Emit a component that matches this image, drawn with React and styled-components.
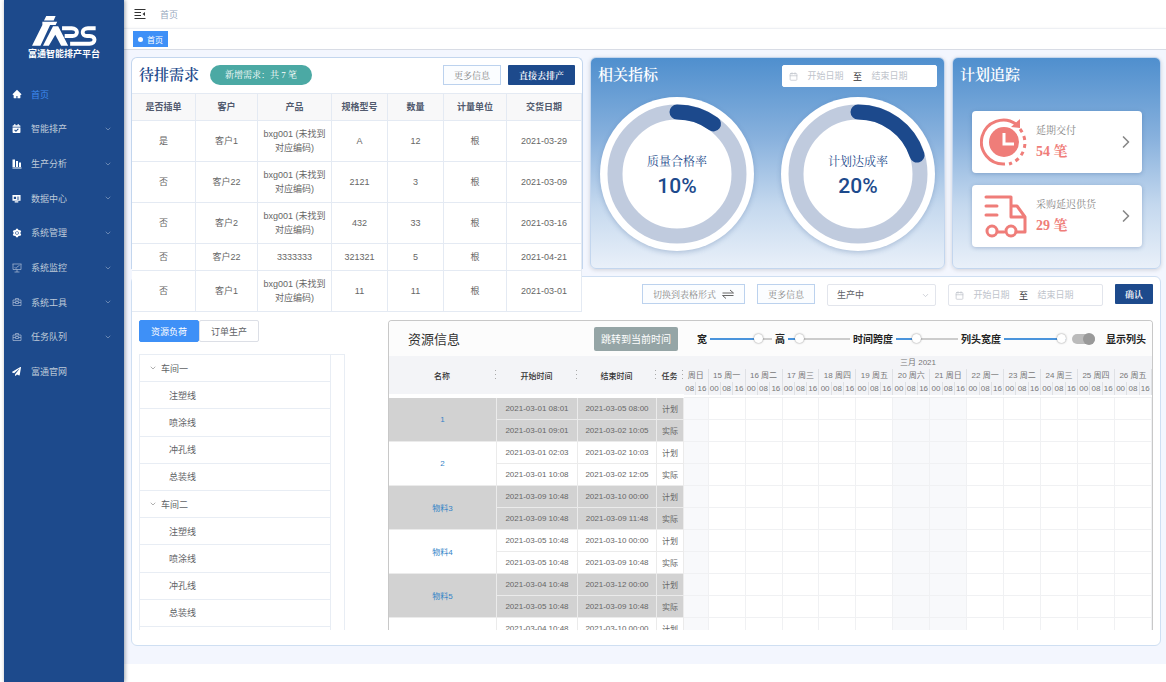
import React, { useState } from 'react';
import styled, { createGlobalStyle } from 'styled-components';
import { AiFillHome, AiFillSetting } from 'react-icons/ai';
import { FaCalendarCheck, FaPaperPlane } from 'react-icons/fa';
import { Calendar, ChevronDown, ChevronRight } from 'lucide-react';

const demandColumns = [
  { title: '是否插单', width: 64 },
  { title: '客户', width: 62 },
  { title: '产品', width: 74 },
  { title: '规格型号', width: 56 },
  { title: '数量', width: 56 },
  { title: '计量单位', width: 63 },
  { title: '交货日期', width: 75 },
];

const demandRows = [
  ['是', '客户1', 'bxg001 (未找到对应编码)', 'A', '12', '根', '2021-03-29'],
  ['否', '客户22', 'bxg001 (未找到对应编码)', '2121', '3', '根', '2021-03-09'],
  ['否', '客户2', 'bxg001 (未找到对应编码)', '432', '33', '根', '2021-03-16'],
  ['否', '客户22', '3333333', '321321', '5', '根', '2021-04-21'],
  ['否', '客户1', 'bxg001 (未找到对应编码)', '11', '11', '根', '2021-03-01'],
];

const lines = ['注塑线', '喷涂线', '冲孔线', '总装线'];
const workshops = ['车间一', '车间二'];

const tasks = [
  {
    name: '1',
    plan: ['2021-03-01 08:01', '2021-03-05 08:00'],
    real: ['2021-03-01 09:01', '2021-03-02 10:05'],
  },
  {
    name: '2',
    plan: ['2021-03-01 02:03', '2021-03-02 10:03'],
    real: ['2021-03-01 10:08', '2021-03-02 12:05'],
  },
  {
    name: '物料3',
    plan: ['2021-03-09 10:48', '2021-03-10 00:00'],
    real: ['2021-03-09 10:48', '2021-03-09 11:48'],
  },
  {
    name: '物料4',
    plan: ['2021-03-05 10:48', '2021-03-10 00:00'],
    real: ['2021-03-05 10:48', '2021-03-09 10:48'],
  },
  {
    name: '物料5',
    plan: ['2021-03-04 10:48', '2021-03-12 00:00'],
    real: ['2021-03-05 10:48', '2021-03-09 10:48'],
  },
  {
    name: '',
    plan: ['2021-03-04 10:48', '2021-03-10 00:00'],
  },
];

const days = [
  { label: '周日', hours: ['08', '16'], rest: true },
  ...['15 周一', '16 周二', '17 周三', '18 周四', '19 周五', '20 周六', '21 周日', '22 周一', '23 周二', '24 周三', '25 周四', '26 周五'].map(
    (label) => ({
      label,
      hours: ['00', '08', '16'],
      rest: label.includes('周六') || label.includes('周日'),
    })
  ),
];

const BarsIcon = () => (
  <svg width="10" height="10" viewBox="0 0 20 20" fill="currentColor">
    <path d="M1 1h5v15H1zM8 4h4v12H8zM14 7h4v9h-4zM1 17h18v2H1z" />
  </svg>
);
const DataIcon = () => (
  <svg width="9" height="9" viewBox="0 0 20 20" fill="currentColor">
    <path
      fillRule="evenodd"
      d="M1 2h18v13H1zM4 6v5h5V6zM11 6v2h5V6zM11 10v2h5v-2zM6 16h8v3H6z"
    />
  </svg>
);
const MonitorIcon = () => (
  <svg width="10" height="10" viewBox="0 0 20 20" fill="none" stroke="currentColor" strokeWidth="1.5">
    <path d="M1 2h18M2 2v11h16V2M10 13v5M5 18h10M5 8l3 3 3-4 4-2" />
  </svg>
);
const ToolboxIcon = () => (
  <svg width="10" height="10" viewBox="0 0 20 20" fill="none" stroke="currentColor" strokeWidth="1.5">
    <path d="M2 6h16v11H2zM7 6V3h6v3M2 11h5M13 11h5M7 9h6v4H7z" />
  </svg>
);

const menus = [
  { label: '首页', icon: <AiFillHome size={10} />, active: true },
  { label: '智能排产', icon: <FaCalendarCheck size={9} />, more: true },
  { label: '生产分析', icon: <BarsIcon />, more: true },
  { label: '数据中心', icon: <DataIcon />, more: true },
  { label: '系统管理', icon: <AiFillSetting size={10} />, more: true },
  { label: '系统监控', icon: <MonitorIcon />, more: true, dim: true },
  { label: '系统工具', icon: <ToolboxIcon />, more: true, dim: true },
  { label: '任务队列', icon: <ToolboxIcon />, more: true, dim: true },
  { label: '富通官网', icon: <FaPaperPlane size={9} /> },
];

function DateRange({ outlined, name }) {
  return (
    <RangeBox $outlined={outlined}>
      <Calendar size={9} color="#c0c4cc" />
      <RangeInput placeholder="开始日期" aria-label={`${name}开始日期`} />
      <span>至</span>
      <RangeInput placeholder="结束日期" aria-label={`${name}结束日期`} />
    </RangeBox>
  );
}

function RingChart({ label, percent }) {
  const r = 62;
  const length = 2 * Math.PI * r;
  return (
    <Ring>
      <svg width="154" height="154" viewBox="0 0 154 154" fill="none" strokeWidth="15">
        <circle cx="77" cy="77" r={r} stroke="#c0cbde" />
        <circle
          cx="77"
          cy="77"
          r={r}
          stroke="#1c498c"
          strokeLinecap="round"
          strokeDasharray={`${(length * percent) / 100} ${length}`}
          transform="rotate(-90 77 77)"
        />
      </svg>
      <RingText>
        <RingLabel>{label}</RingLabel>
        <RingValue>{percent}%</RingValue>
      </RingText>
    </Ring>
  );
}

function SliderField({ id, label, initial }) {
  const [value, setValue] = useState(initial);
  return (
    <>
      <ToolLabel htmlFor={id}>{label}</ToolLabel>
      <Slider
        id={id}
        type="range"
        min="0"
        max="100"
        value={value}
        style={{ '--fill': `${value}%` }}
        onChange={(e) => setValue(Number(e.target.value))}
      />
    </>
  );
}

function App() {
  const [tab, setTab] = useState('load');
  const [showHead, setShowHead] = useState(true);

  return (
    <Layout>
      <GlobalStyle />
      <Sidebar>
        <Logo>
          <svg width="68" height="31" viewBox="84 42 204 96" fill="#fff">
            <path d="M131 45h29l-6 14h-30z" />
            <path d="M119 63h46l-5 10h-17l-30 64H87l32-64z" />
            <path d="M152 77h16l31 60h-22l-18-34-20 34h-18z" />
            <path
              d="M180 83h30c21 0 21 24 2 24h-24M284 83h-24c-21 0-21 24-3 24h9c19 0 20 24-1 24h-60"
              fill="none"
              stroke="#fff"
              strokeWidth="12"
            />
          </svg>
          <LogoText>富通智能排产平台</LogoText>
        </Logo>
        <Menu>
          {menus.map((menu) => (
            <li key={menu.label}>
              <MenuLink href="#" $active={menu.active}>
                <MenuIcon $dim={menu.dim}>{menu.icon}</MenuIcon>
                <span>{menu.label}</span>
                {menu.more && <ChevronDown size={8} strokeWidth={2} />}
              </MenuLink>
            </li>
          ))}
        </Menu>
      </Sidebar>
      <Content>
        <Navbar>
          <FoldButton aria-label="折叠菜单">
            <svg width="12" height="12" viewBox="0 0 24 24" fill="none" stroke="#333" strokeWidth="2">
              <path d="M1 3h22M1 9h13M1 15h13M1 21h22" />
              <path d="M22 8v8l-5-4z" fill="#333" stroke="none" />
            </svg>
          </FoldButton>
          <span>首页</span>
        </Navbar>
        <TagsBar>
          <Tag href="#">首页</Tag>
        </TagsBar>
        <Main>
          <TopRow>
            <DemandPanel>
              <DemandHead>
                <PanelTitle>待排需求</PanelTitle>
                <Pill>新增需求：共 7 笔</Pill>
                <PlainButton>更多信息</PlainButton>
                <PrimaryButton>直接去排产</PrimaryButton>
              </DemandHead>
              <DemandTable>
                <colgroup>
                  {demandColumns.map((col) => (
                    <col key={col.title} style={{ width: `${(col.width / 450) * 100}%` }} />
                  ))}
                </colgroup>
                <thead>
                  <tr>
                    {demandColumns.map((col) => (
                      <th key={col.title}>{col.title}</th>
                    ))}
                  </tr>
                </thead>
                <tbody>
                  {demandRows.map((row, i) => (
                    <tr key={i}>
                      {row.map((cell, j) => (
                        <td key={j}>{cell}</td>
                      ))}
                    </tr>
                  ))}
                </tbody>
              </DemandTable>
            </DemandPanel>
            <BluePanel>
              <BlueHead>
                <PanelTitle $light>相关指标</PanelTitle>
                <DateRange name="指标" />
              </BlueHead>
              <Rings>
                <RingChart label="质量合格率" percent={10} />
                <RingChart label="计划达成率" percent={20} />
              </Rings>
            </BluePanel>
            <BluePanel>
              <BlueHead>
                <PanelTitle $light>计划追踪</PanelTitle>
              </BlueHead>
              <TrackList>
                <TrackCard>
                  <svg width="48" height="48" viewBox="0 0 48 48" fill="none" stroke="#ef7d79">
                    <path d="M25 46A22 22 0 1 1 36 6" strokeWidth="3" />
                    <path d="M31 9l9-8v9z" fill="#ef7d79" strokeWidth="0" />
                    <path d="M40 11A22 22 0 0 1 29 46" strokeWidth="3" strokeDasharray="4 4" />
                    <circle cx="24" cy="24" r="15" fill="#ef7d79" stroke="none" />
                    <path d="M24 15v11h10" stroke="#fff" strokeWidth="3" />
                  </svg>
                  <TrackText>
                    <TrackName>延期交付</TrackName>
                    <TrackValue>54 笔</TrackValue>
                  </TrackText>
                  <ChevronRight size={20} color="#888" strokeWidth={2} />
                </TrackCard>
                <TrackCard>
                  <svg
                    width="48"
                    height="48"
                    viewBox="0 0 48 48"
                    fill="none"
                    stroke="#ef7d79"
                    strokeWidth="3"
                    strokeLinecap="round"
                    strokeLinejoin="round"
                  >
                    <path d="M6 5h25v20h13M6 14h11M6 23h11M31 14h6l8 11v15h-9M18 40h6" />
                    <circle cx="12" cy="39" r="5" />
                    <circle cx="31" cy="39" r="5" />
                  </svg>
                  <TrackText>
                    <TrackName>采购延迟供货</TrackName>
                    <TrackValue>29 笔</TrackValue>
                  </TrackText>
                  <ChevronRight size={20} color="#888" strokeWidth={2} />
                </TrackCard>
              </TrackList>
            </BluePanel>
          </TopRow>

          <ResourcePanel>
            <FilterBar>
              <PlainButton>
                切换到表格形式
                <svg width="12" height="10" viewBox="0 0 24 20" fill="none" stroke="#666" strokeWidth="2">
                  <path d="M1 8h22l-7-6M23 13H1l7 6" />
                </svg>
              </PlainButton>
              <PlainButton>更多信息</PlainButton>
              <SelectWrap>
                <Select aria-label="生产状态" defaultValue="生产中">
                  <option>生产中</option>
                  <option>已完成</option>
                </Select>
                <ChevronDown size={9} color="#c0c4cc" />
              </SelectWrap>
              <DateRange outlined name="排产" />
              <PrimaryButton $small>确认</PrimaryButton>
            </FilterBar>
            <ResourceBody>
              <TreeSide>
                <Tabs>
                  <TabButton $active={tab === 'load'} onClick={() => setTab('load')}>
                    资源负荷
                  </TabButton>
                  <TabButton $active={tab === 'order'} onClick={() => setTab('order')}>
                    订单生产
                  </TabButton>
                </Tabs>
                <TreeBox>
                  <Tree>
                    {workshops.map((shop) => (
                      <React.Fragment key={shop}>
                        <TreeRow>
                          <ChevronDown size={8} color="#888" />
                          {shop}
                        </TreeRow>
                        {lines.map((line) => (
                          <TreeRow key={line} $child>
                            {line}
                          </TreeRow>
                        ))}
                      </React.Fragment>
                    ))}
                  </Tree>
                </TreeBox>
              </TreeSide>
              <Gantt>
                <GanttToolbar>
                  <GanttTitle>资源信息</GanttTitle>
                  <JumpButton>跳转到当前时间</JumpButton>
                  <SliderField id="width" label="宽" initial={83} />
                  <SliderField id="height" label="高" initial={14} />
                  <SliderField id="span" label="时间跨度" initial={30} />
                  <SliderField id="head" label="列头宽度" initial={100} />
                  <Switch
                    id="showHead"
                    type="checkbox"
                    checked={showHead}
                    onChange={(e) => setShowHead(e.target.checked)}
                  />
                  <ToolLabel htmlFor="showHead">显示列头</ToolLabel>
                </GanttToolbar>
                <GanttBody>
                  <TaskTable>
                    <colgroup>
                      <col width="108" />
                      <col width="81" />
                      <col width="79" />
                      <col width="27" />
                    </colgroup>
                    <thead>
                      <tr>
                        {['名称', '开始时间', '结束时间', '任务'].map((title) => (
                          <th key={title}>
                            <HeadCell>
                              <span>{title}</span>
                              <Dots width="2" height="12" viewBox="0 0 2 12" fill="#aaa">
                                <path d="M0 1h1v1H0zM0 5h1v1H0zM0 9h1v1H0z" />
                              </Dots>
                            </HeadCell>
                          </th>
                        ))}
                      </tr>
                    </thead>
                    {tasks.map((task, i) => (
                      <TaskGroup key={i} $gray={i % 2 === 0}>
                        <tr>
                          <td rowSpan={task.real ? 2 : 1}>
                            <TaskLink href="#">{task.name}</TaskLink>
                          </td>
                          <td>{task.plan[0]}</td>
                          <td>{task.plan[1]}</td>
                          <td>计划</td>
                        </tr>
                        {task.real && (
                          <tr>
                            <td>{task.real[0]}</td>
                            <td>{task.real[1]}</td>
                            <td>实际</td>
                          </tr>
                        )}
                      </TaskGroup>
                    ))}
                  </TaskTable>
                  <TimeTable>
                    <thead>
                      <tr>
                        <TimeHead colSpan="38">三月 2021</TimeHead>
                      </tr>
                      <tr>
                        {days.map((day) => (
                          <TimeHead key={day.label} colSpan={day.hours.length} $line>
                            {day.label}
                          </TimeHead>
                        ))}
                      </tr>
                      <tr>
                        {days.map((day) =>
                          day.hours.map((hour) => (
                            <TimeHead key={day.label + hour} $line>
                              {hour}
                            </TimeHead>
                          ))
                        )}
                      </tr>
                      <tr>
                        <TimeGap colSpan="38" />
                      </tr>
                    </thead>
                    <tbody>
                      {tasks.flatMap((task, i) =>
                        ['plan', 'real'].map((kind) => (
                          <tr key={kind + i}>
                            {days.map((day) => (
                              <TimeCell key={day.label} colSpan={day.hours.length} $rest={day.rest} />
                            ))}
                          </tr>
                        ))
                      )}
                    </tbody>
                  </TimeTable>
                </GanttBody>
              </Gantt>
            </ResourceBody>
          </ResourcePanel>
        </Main>
      </Content>
    </Layout>
  );
}

export default App;

const sans = `"Liberation Sans", "Noto Sans CJK SC", sans-serif`;
const serif = `"Liberation Serif", "Noto Serif CJK SC", "Noto Sans CJK SC", serif`;

const GlobalStyle = createGlobalStyle`
  * {
    box-sizing: border-box;
  }
  body {
    margin: 0;
    background: #fff;
    font-family: ${sans};
    font-size: 9px;
    color: #606266;
  }
  button, input, select {
    font-family: inherit;
    font-size: 9px;
    margin: 0;
  }
  button {
    cursor: pointer;
  }
  a {
    text-decoration: none;
  }
  h2 {
    margin: 0;
  }
  svg {
    flex: none;
  }
`;
const Layout = styled.div`
  display: flex;
  min-height: 100vh;
  padding-left: 4px;
`;
const Sidebar = styled.aside`
  flex: none;
  width: 120px;
  background: #1d4a8c;
  box-shadow: 1px 0 4px rgba(0, 21, 41, 0.4);
  z-index: 1;
`;
const Logo = styled.div`
  height: 77px;
  padding-top: 15px;
  display: flex;
  flex-direction: column;
  align-items: center;
`;
const LogoText = styled.span`
  color: #fff;
  font-weight: 700;
  line-height: 16px;
`;
const Menu = styled.ul`
  list-style: none;
  margin: 0;
  padding: 0;
  height: 312px;
  display: grid;
  grid-auto-rows: 1fr;
`;
const MenuLink = styled.a`
  height: 100%;
  display: flex;
  align-items: center;
  padding: 0 12px 0 8px;
  color: ${(props) => (props.$active ? '#3d8af0' : '#bfcbd9')};

  span:nth-child(2) {
    flex: 1;
  }
  > svg {
    color: #8ea5c6;
  }
`;
const MenuIcon = styled.span`
  display: flex;
  width: 19px;
  color: ${(props) => (props.$dim ? '#a5b7d1' : '#fff')};
`;
const Content = styled.div`
  flex: 1;
  min-width: 0;
`;
const Navbar = styled.header`
  height: 28px;
  display: flex;
  align-items: center;
  gap: 14px;
  padding: 0 10px;
  color: #97a8be;
`;
const FoldButton = styled.button`
  display: flex;
  border: none;
  padding: 0;
  background: none;
`;
const TagsBar = styled.nav`
  height: 22px;
  display: flex;
  align-items: center;
  padding: 0 9px;
  border-top: 1px solid #eef0f4;
  border-bottom: 1px solid #d8dce5;
  box-shadow: 0 1px 3px rgba(0, 0, 0, 0.1);
`;
const Tag = styled.a`
  display: flex;
  align-items: center;
  gap: 4px;
  height: 16px;
  padding: 0 5px;
  font-size: 8px;
  color: #fff;
  background: #3e90f7;

  &::before {
    content: '';
    width: 5px;
    height: 5px;
    border-radius: 50%;
    background: #fff;
  }
`;
const Main = styled.main`
  padding: 7px 5px 18px 7px;
  background: #f3f6fe;
`;
const TopRow = styled.div`
  display: grid;
  grid-template-columns: 452fr 355fr 209fr;
  grid-template-rows: 212px;
  gap: 7px;
`;
const DemandPanel = styled.section`
  min-width: 0;
  border: 1px solid #c3d6ee;
  border-bottom: none;
  border-radius: 6px 6px 0 0;
  background: #fff;
`;
const DemandHead = styled.div`
  display: flex;
  align-items: flex-start;
  gap: 7px;
  height: 35px;
  padding: 7px 7px 0;
`;
const PanelTitle = styled.h2`
  font-family: ${serif};
  font-size: 15px;
  font-weight: 600;
  line-height: 20px;
  color: ${(props) => (props.$light ? '#fff' : '#1d4a8c')};
`;
const Pill = styled.span`
  margin: 0 auto 0 4px;
  padding: 0 15px;
  border-radius: 10px;
  font-family: ${serif};
  line-height: 20px;
  color: #fff;
  background: #4ba9a4;
`;
const PlainButton = styled.button`
  display: flex;
  align-items: center;
  gap: 6px;
  height: 20px;
  padding: 0 10px;
  border: 1px solid #bcd2ee;
  font-family: ${serif};
  white-space: nowrap;
  color: #888;
  background: #fbfdff;
`;
const PrimaryButton = styled.button`
  height: 20px;
  padding: 0 ${(props) => (props.$small ? '10px' : '11px')};
  border: none;
  border-radius: 1px;
  font-family: ${serif};
  font-weight: 600;
  white-space: nowrap;
  color: #fff;
  background: #1d4a8c;
`;
/* the last rows run over the panel below */
const DemandTable = styled.table`
  position: relative;
  z-index: 1;
  width: 100%;
  table-layout: fixed;
  border-collapse: separate;
  border-spacing: 0;
  background: #fff;
  border-top: 1px solid #e4eaf3;

  th,
  td {
    padding: 6px 3px;
    line-height: 14px;
    text-align: center;
    border-right: 1px solid #e4eaf3;
    border-bottom: 1px solid #e4eaf3;
  }
  td {
    color: #666;
  }
  th {
    color: #515a6e;
    background: #f8f8f9;
  }
`;
const BluePanel = styled.section`
  min-width: 0;
  border: 1px solid #c3d6ee;
  border-radius: 6px;
  padding: 7px;
  background: linear-gradient(#4f8fce, #88b1dd 38%, #c4d8ee 70%, #e9f0f9);
  box-shadow: 0 1px 4px rgba(0, 0, 0, 0.15);
`;
const BlueHead = styled.div`
  display: flex;
  justify-content: space-between;
  height: 32px;
`;
const RangeBox = styled.div`
  display: flex;
  align-items: center;
  width: 155px;
  height: 22px;
  padding: 0 6px;
  border: 1px solid ${(props) => (props.$outlined ? '#e2e5ec' : '#fff')};
  border-radius: 2px;
  color: #303133;
  background: #fff;
`;
const RangeInput = styled.input`
  width: 55px;
  padding: 0;
  border: none;
  outline: none;
  text-align: center;
  background: none;

  &::placeholder {
    color: #c0c4cc;
  }
`;
const Rings = styled.div`
  display: flex;
  justify-content: space-between;
  padding: 0 2px;
`;
const Ring = styled.div`
  display: grid;
  width: 154px;
  height: 154px;
  border-radius: 50%;
  background: #fff;
  box-shadow: 0 2px 5px rgba(40, 80, 140, 0.25);

  > * {
    grid-area: 1 / 1;
  }
`;
const RingText = styled.div`
  display: flex;
  flex-direction: column;
  align-items: center;
  justify-content: center;
  color: #1d4a8c;
`;
const RingLabel = styled.span`
  font-family: ${serif};
  font-size: 12px;
  line-height: 24px;
`;
const RingValue = styled.strong`
  font-family: Roboto, sans-serif;
  font-size: 21px;
  font-weight: 500;
  line-height: 24px;
`;
const TrackList = styled.div`
  display: flex;
  flex-direction: column;
  gap: 12px;
  padding: 14px 11px 0 12px;
`;
const TrackCard = styled.div`
  display: flex;
  align-items: center;
  gap: 8px;
  height: 62px;
  padding: 0 6px 0 8px;
  border-radius: 4px;
  background: #fff;
  box-shadow: 0 1px 4px rgba(40, 80, 140, 0.3);
`;
const TrackText = styled.div`
  flex: 1;
  display: flex;
  flex-direction: column;
  font-family: ${serif};
`;
const TrackName = styled.span`
  font-size: 10px;
  line-height: 20px;
  color: #888;
  white-space: nowrap;
`;
const TrackValue = styled.strong`
  font-size: 14px;
  line-height: 22px;
  color: #ef7d79;
`;
const ResourcePanel = styled.section`
  margin-top: 7px;
  padding: 7px 7px 15px;
  border: 1px solid #cfdff2;
  border-radius: 6px;
  background: #fff;
`;
const FilterBar = styled.div`
  display: flex;
  justify-content: flex-end;
  gap: 12px;
  height: 36px;
`;
const SelectWrap = styled.div`
  position: relative;
  width: 109px;
  height: 22px;

  svg {
    position: absolute;
    right: 6px;
    top: 7px;
    pointer-events: none;
  }
`;
const Select = styled.select`
  appearance: none;
  width: 100%;
  height: 100%;
  padding: 0 9px;
  border: 1px solid #e2e5ec;
  border-radius: 2px;
  color: #606266;
  background: #fff;
`;
const ResourceBody = styled.div`
  display: flex;
  justify-content: space-between;
  gap: 43px;
  height: 310px;
`;
const TreeSide = styled.div`
  flex: none;
  width: 206px;
  display: flex;
  flex-direction: column;
  gap: 12px;
  min-height: 0;
`;
const Tabs = styled.div`
  display: flex;
`;
const TabButton = styled.button`
  height: 22px;
  padding: 0 11px;
  border: 1px solid ${(props) => (props.$active ? '#3e90f7' : '#dcdfe6')};
  border-radius: 2px;
  color: ${(props) => (props.$active ? '#fff' : '#606266')};
  background: ${(props) => (props.$active ? '#3e90f7' : '#fff')};
`;
const TreeBox = styled.div`
  flex: 1;
  min-height: 0;
  overflow: hidden;
  padding-right: 13px;
  border: 1px solid #e8edf4;
  border-bottom: none;
`;
const Tree = styled.ul`
  list-style: none;
  margin: 0;
  padding: 0;
  height: 100%;
  display: grid;
  grid-auto-rows: 1fr;
  padding-bottom: 3px;
  border-right: 1px solid #e8edf4;
`;
const TreeRow = styled.li`
  display: flex;
  align-items: center;
  gap: 4px;
  padding-left: ${(props) => (props.$child ? '29px' : '9px')};
  border-bottom: 1px solid #e8edf4;
`;
const Gantt = styled.section`
  flex: 1;
  min-width: 0;
  overflow: hidden;
  border: 1px solid #c8c8c8;
  border-bottom: none;
  border-radius: 4px 4px 0 0;
`;
const GanttToolbar = styled.div`
  display: flex;
  align-items: center;
  gap: 3px;
  height: 35px;
  padding: 0 6px 0 19px;
  background: #fcfcfc;
`;
const GanttTitle = styled.h2`
  margin-right: auto;
  font-size: 13px;
  font-weight: 400;
  color: #333;
`;
const JumpButton = styled.button`
  height: 24px;
  margin-right: 16px;
  padding: 0 7px;
  border: none;
  border-radius: 2px;
  font-size: 10px;
  color: #fff;
  background: #95a5a6;
`;
const ToolLabel = styled.label`
  font-size: 10px;
  font-weight: 700;
  white-space: nowrap;
  color: #222;
`;
const Slider = styled.input`
  appearance: none;
  width: 62px;
  height: 12px;
  background: linear-gradient(#4a94dc, #4a94dc) left center / var(--fill) 2px no-repeat,
    linear-gradient(#ccc, #ccc) center / 100% 2px no-repeat;

  &::-webkit-slider-thumb {
    appearance: none;
    width: 9px;
    height: 9px;
    border-radius: 50%;
    background: #fff;
    box-shadow: 0 0 2px rgba(0, 0, 0, 0.5);
  }
`;
const Switch = styled.input`
  appearance: none;
  display: flex;
  align-items: center;
  justify-content: flex-end;
  width: 23px;
  height: 10px;
  margin: 0 8px 0 3px;
  border-radius: 5px;
  background: #bbb;

  &::after {
    content: '';
    width: 12px;
    height: 12px;
    border-radius: 50%;
    background: #999;
  }
`;
const GanttBody = styled.div`
  display: flex;
  align-items: flex-start;
`;
const TaskTable = styled.table`
  flex: none;
  width: 295px;
  table-layout: fixed;
  border-collapse: separate;
  border-spacing: 0;
  font-size: 8px;

  th {
    height: 42px;
    padding: 0;
    border-bottom: 4px solid #fff;
    font-weight: 500;
    color: #333;
    background: #f3f4f7;
  }
  td {
    height: 22px;
    padding: 0;
    text-align: center;
    white-space: nowrap;
    border-right: 1px solid #ebebeb;
    border-bottom: 1px solid #ebebeb;
    color: #666;
  }
`;
const HeadCell = styled.div`
  display: flex;
  align-items: center;

  span {
    flex: 1;
  }
`;
const Dots = styled.svg`
  width: 2px;
`;
const TaskGroup = styled.tbody`
  background: ${(props) => (props.$gray ? '#d2d2d2' : '#fff')};
`;
const TaskLink = styled.a`
  color: #3584c7;
`;
const TimeTable = styled.table`
  flex: 1;
  min-width: 0;
  table-layout: fixed;
  border-collapse: separate;
  border-spacing: 0;
  font-size: 8px;
`;
const TimeHead = styled.th`
  height: 13px;
  padding: 0;
  border-right: ${(props) => (props.$line ? '1px solid #dfe1e5' : 'none')};
  font-weight: 400;
  line-height: 12px;
  white-space: nowrap;
  color: #777;
  background: #f3f4f7;
`;
const TimeGap = styled.th`
  height: 3px;
  padding: 0;
  border-bottom: 1px solid #eeeff1;
`;
const TimeCell = styled.td`
  height: 22px;
  padding: 0;
  border-right: 1px solid #f0f1f3;
  border-bottom: 1px solid #f0f1f3;
  background: ${(props) => (props.$rest ? '#f8f9fb' : '#fff')};
`;
